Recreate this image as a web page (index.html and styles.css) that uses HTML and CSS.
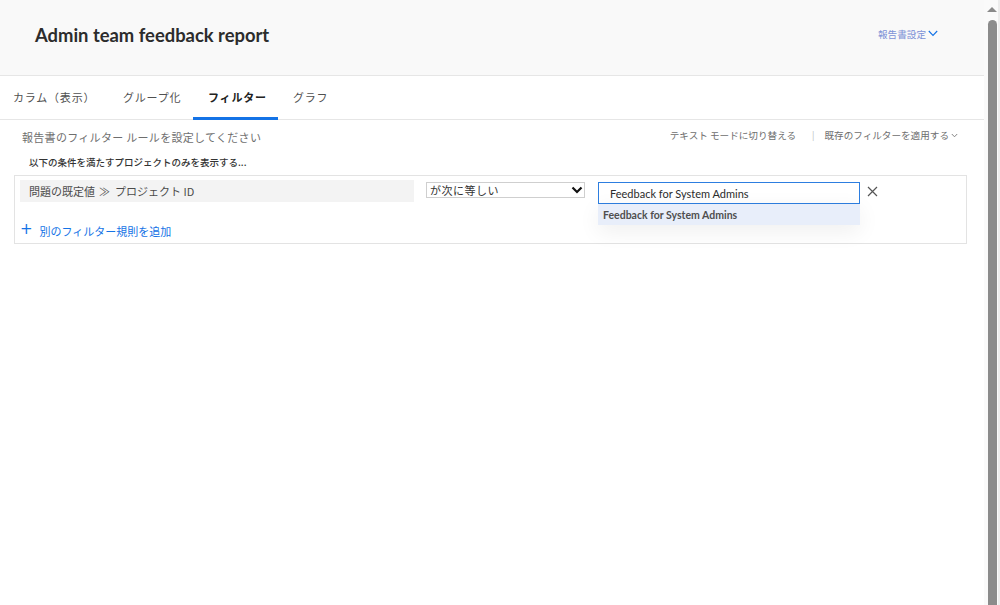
FILE: index.html
```html
<!DOCTYPE html>
<html lang="ja">
<head>
<meta charset="utf-8">
<link rel="stylesheet" href="styles.css">
</head>
<body>
<div class="page">
  <div class="main">
    <header class="header">
      <h1 class="title">Admin team feedback report</h1>
      <a class="settings">報告書設定
        <svg width="10" height="7" viewBox="0 0 10 7"><path d="M0.8 1 L5 5.5 L9.2 1" fill="none" stroke="#1473e6" stroke-width="1.1"/></svg>
      </a>
    </header>
    <nav class="tabs">
      <span class="tab tab-first">カラム（表示）</span>
      <span class="tab">グループ化</span>
      <span class="tab active">フィルター</span>
      <span class="tab">グラフ</span>
    </nav>
    <section class="content">
      <div class="toolbar">
        <span class="hint">報告書のフィルター ルールを設定してください</span>
        <span class="actions">テキスト モードに切り替える<span class="sep">|</span>既存のフィルターを適用する
          <svg width="7" height="5" viewBox="0 0 7 5"><path d="M0.8 1 L3.5 3.8 L6.2 1" fill="none" stroke="#777" stroke-width="0.9"/></svg>
        </span>
      </div>
      <div class="condition">以下の条件を満たすプロジェクトのみを表示する...</div>
      <div class="box">
        <div class="rule">
          <div class="field">問題の既定値 <span class="arrows">≫</span> プロジェクト ID</div>
          <div class="select">が次に等しい
            <svg width="12" height="8" viewBox="0 0 12 8"><path d="M1.5 1.5 L6 6 L10.5 1.5" fill="none" stroke="#111" stroke-width="2.2"/></svg>
          </div>
          <div class="value">
            <div class="input">Feedback for System Admins</div>
            <div class="menu"><div class="option">Feedback for System Admins</div></div>
          </div>
          <svg class="remove" width="11" height="11" viewBox="0 0 11 11"><path d="M1 1 L10 10 M10 1 L1 10" stroke="#555" stroke-width="1.2"/></svg>
        </div>
        <a class="add"><span class="plus">+</span>別のフィルター規則を追加</a>
      </div>
    </section>
  </div>
  <div class="scrollbar">
    <div class="up"></div>
    <div class="thumb"></div>
  </div>
</div>
</body>
</html>
```
FILE: styles.css
```css
html, body {
  margin: 0;
  padding: 0;
  height: 100%;
  overflow: hidden;
}
body {
  font-family: "Lato", "Noto Sans CJK JP", sans-serif;
  color: #2c2c2c;
  background: #fff;
}
.page {
  display: flex;
  height: 605px;
}
.main {
  flex: 1;
  min-width: 0;
}
.header {
  height: 75px;
  background: #f9f9f9;
  border-bottom: 1px solid #e6e6e6;
  display: flex;
  align-items: center;
  justify-content: space-between;
  padding: 0 46px 0 35px;
}
.title {
  margin: 0;
  font-size: 18.4px;
  font-weight: 700;
  color: #2c2c2c;
  position: relative;
  top: -3px;
}
.settings {
  font-family: "Noto Sans CJK JP", sans-serif;
  font-size: 9.6px;
  color: #7c91d6;
  display: flex;
  align-items: center;
  gap: 2px;
  position: relative;
  top: -4px;
}
.tabs {
  height: 43px;
  border-bottom: 1px solid #e6e6e6;
  display: flex;
  font-family: "Noto Sans CJK JP", sans-serif;
  font-size: 11px;
  color: #505050;
  letter-spacing: 0.8px;
}
.tab {
  box-sizing: border-box;
  width: 85px;
  padding: 1px 0 0 15px;
  display: flex;
  align-items: center;
  border-bottom: 3px solid transparent;
  margin-bottom: -1px;
}
.tab-first {
  width: 108px;
  padding-left: 13px;
}
.active {
  border-bottom-color: #1473e6;
  color: #222;
  font-weight: 700;
}
.content {
  padding: 0 17px 0 14px;
  font-family: "Noto Sans CJK JP", sans-serif;
}
.toolbar {
  display: flex;
  justify-content: space-between;
  align-items: center;
  padding: 8px 9px 0 8px;
  height: 18px;
}
.hint {
  font-size: 11px;
  color: #6e6e6e;
  letter-spacing: 0.3px;
}
.actions {
  font-size: 9.6px;
  color: #6e6e6e;
  display: flex;
  align-items: center;
  gap: 2px;
  position: relative;
  top: -2px;
}
.sep {
  color: #bbb;
  margin: 0 8px 0 14px;
  font-size: 9px;
}
.condition {
  font-size: 9.5px;
  color: #333;
  font-weight: 500;
  padding: 5px 0 0 15px;
  height: 22px;
  box-sizing: border-box;
  margin-top: 4px;
}
.box {
  border: 1px solid #e3e3e3;
  height: 69px;
  box-sizing: border-box;
  padding: 4px 5px;
  margin-top: 3px;
}
.rule {
  display: flex;
  align-items: flex-start;
}
.field {
  width: 385px;
  height: 22px;
  background: #f3f3f3;
  font-size: 11px;
  color: #4b4b4b;
  display: flex;
  align-items: center;
  padding-left: 9px;
}
.arrows {
  margin: 0 5px 0 4px;
  color: #555;
}
.select {
  margin: 2px 0 0 12px;
  width: 159px;
  height: 16px;
  box-sizing: border-box;
  border: 1px solid #cfcfcf;
  font-size: 11px;
  color: #333;
  letter-spacing: 0.5px;
  display: flex;
  align-items: center;
  justify-content: space-between;
  padding: 0 1px 0 3px;
}
.value {
  margin: 2px 0 0 13px;
  width: 262px;
  position: relative;
}
.input {
  height: 22px;
  box-sizing: border-box;
  border: 1px solid #2d7ee0;
  font-family: "Lato", sans-serif;
  font-size: 11px;
  color: #2c2c2c;
  display: flex;
  align-items: center;
  padding-left: 11px;
}
.menu {
  position: absolute;
  top: 100%;
  left: 0;
  right: 0;
  background: #e8eefa;
  height: 21px;
  display: flex;
  align-items: center;
  box-shadow: 0 6px 22px rgba(0,0,0,0.07);
}
.option {
  font-family: "Lato", sans-serif;
  font-size: 10.5px;
  color: #4f4f4f;
  font-weight: 700;
  padding-left: 5px;
}
.remove {
  margin: 6px 0 0 7px;
}
.add {
  display: flex;
  align-items: center;
  gap: 6px;
  margin: 19px 0 0 1px;
  font-size: 11px;
  color: #1473e6;
  line-height: 16px;
}
.plus {
  font-family: "DejaVu Sans", sans-serif;
  font-size: 15px;
  line-height: 1;
  position: relative;
  top: -2px;
  left: -1px;
}
.scrollbar {
  width: 16px;
  background: #fafafa;
  border-right: 2px solid #ececec;
  box-sizing: border-box;
  display: flex;
  flex-direction: column;
  align-items: center;
  padding-left: 2px;
}
.up {
  margin-top: 7px;
  width: 0;
  height: 0;
  border-left: 5px solid transparent;
  border-right: 5px solid transparent;
  border-bottom: 5px solid #8a8a8a;
}
.thumb {
  margin-top: 8px;
  width: 9px;
  flex: 1;
  background: #8b8b8b;
  border-radius: 5px 5px 0 0;
}
```
